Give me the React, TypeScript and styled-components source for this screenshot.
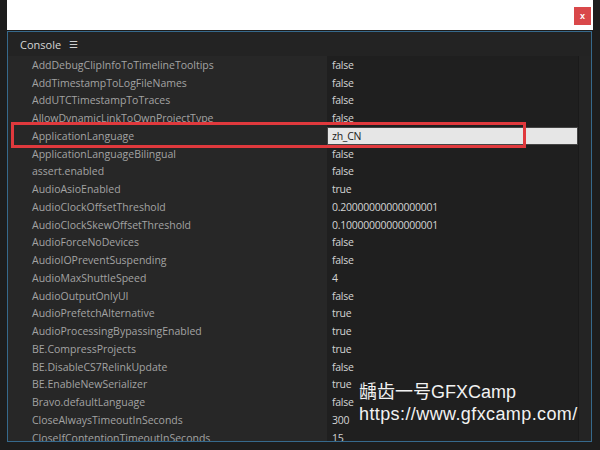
import React from "react";
import styled, { createGlobalStyle } from "styled-components";

const Global = createGlobalStyle`
  html, body { margin: 0; padding: 0; background: #1d1d1d; }
  body { width: 600px; height: 450px; overflow: hidden; font-family: "Open Sans", "Liberation Sans", sans-serif; }
`;

const Page = styled.div`
  position: relative;
  width: 600px;
  height: 450px;
  background: #1d1d1d;
  display: flex;
  flex-direction: column;
`;

const TitleBar = styled.div`
  margin: 0 7px 0 7px;
  height: 30px;
  background: #ffffff;
  display: flex;
  justify-content: flex-end;
  align-items: flex-start;
  padding: 7px 2px 0 0;
  box-sizing: border-box;
`;

const CloseButton = styled.div`
  width: 17px;
  height: 18px;
  background: #d9484a;
  color: #ffffff;
  font: bold 9px "Liberation Sans", sans-serif;
  display: flex;
  align-items: center;
  justify-content: center;
`;

const Panel = styled.div`
  margin: 1px 8px 0 7px;
  height: 409px;
  border: 1px solid #36698c;
  background: #1f1f1f;
  display: flex;
  flex-direction: column;
  overflow: hidden;
`;

const Header = styled.div`
  height: 24px;
  flex: none;
  background: #232323;
  display: flex;
  align-items: center;
  padding-left: 12px;
  gap: 8px;
  color: #d6d6d6;
  font-size: 11px;
`;

const MenuIcon = styled.span`
  font-size: 10px;
  color: #cfcfcf;
`;

const Body = styled.div`
  flex: 1;
  display: flex;
  overflow: hidden;
`;

const Table = styled.div`
  flex: 1;
  display: grid;
  grid-template-columns: 319px 1fr;
  grid-auto-rows: 17.76px;
  align-content: start;
  background: linear-gradient(to right, #272727 0 319px, #1f1f1f 319px);
`;

const KeyCell = styled.div`
  padding-left: 24px;
  color: #a3a3a3;
  font-size: 10.5px;
  display: flex;
  align-items: center;
  white-space: nowrap;
`;

const ValueCell = styled.div<{ $edit?: boolean }>`
  padding-left: 5px;
  color: ${(p) => (p.$edit ? "#1a1a1a" : "#d4d4d4")};
  background: ${(p) => (p.$edit ? "#e6e6e6" : "transparent")};
  box-shadow: ${(p) => (p.$edit ? "inset 0 0 0 1px #444" : "none")};
  font-size: 10.5px;
  letter-spacing: -0.25px;
  display: flex;
  align-items: center;
  white-space: nowrap;
`;

const Scrollbar = styled.div`
  width: 12px;
  flex: none;
  background: #242424;
  border-left: 1px solid #1a1a1a;
`;

const Annotation = styled.div`
  position: absolute;
  left: 11px;
  top: 122px;
  width: 509px;
  height: 20px;
  border: 3px solid #e0393d;
`;

const Watermark = styled.div`
  position: absolute;
  left: 359px;
  top: 381px;
  color: #f2f2f2;
  font-family: "Liberation Sans", "Noto Sans CJK SC", sans-serif;
  font-size: 18px;
  line-height: 22px;
`;

const WatermarkUrl = styled.div`
  letter-spacing: 0.4px;
`;

const rows: [string, string][] = [
  ["AddDebugClipInfoToTimelineTooltips", "false"],
  ["AddTimestampToLogFileNames", "false"],
  ["AddUTCTimestampToTraces", "false"],
  ["AllowDynamicLinkToOwnProjectType", "false"],
  ["ApplicationLanguage", "zh_CN"],
  ["ApplicationLanguageBilingual", "false"],
  ["assert.enabled", "false"],
  ["AudioAsioEnabled", "true"],
  ["AudioClockOffsetThreshold", "0.20000000000000001"],
  ["AudioClockSkewOffsetThreshold", "0.10000000000000001"],
  ["AudioForceNoDevices", "false"],
  ["AudioIOPreventSuspending", "false"],
  ["AudioMaxShuttleSpeed", "4"],
  ["AudioOutputOnlyUI", "false"],
  ["AudioPrefetchAlternative", "true"],
  ["AudioProcessingBypassingEnabled", "true"],
  ["BE.CompressProjects", "true"],
  ["BE.DisableCS7RelinkUpdate", "false"],
  ["BE.EnableNewSerializer", "true"],
  ["Bravo.defaultLanguage", "false"],
  ["CloseAlwaysTimeoutInSeconds", "300"],
  ["CloseIfContentionTimeoutInSeconds", "15"],
];

export default function App() {
  return (
    <Page>
      <Global />
      <TitleBar>
        <CloseButton>x</CloseButton>
      </TitleBar>
      <Panel>
        <Header>
          <span>Console</span>
          <MenuIcon>☰</MenuIcon>
        </Header>
        <Body>
          <Table>
            {rows.map(([k, v]) => (
              <React.Fragment key={k}>
                <KeyCell>{k}</KeyCell>
                <ValueCell $edit={k === "ApplicationLanguage"}>{v}</ValueCell>
              </React.Fragment>
            ))}
          </Table>
          <Scrollbar />
        </Body>
      </Panel>
      <Annotation />
      <Watermark>
        <div>龋齿一号GFXCamp</div>
        <WatermarkUrl>https://www.gfxcamp.com/</WatermarkUrl>
      </Watermark>
    </Page>
  );
}
